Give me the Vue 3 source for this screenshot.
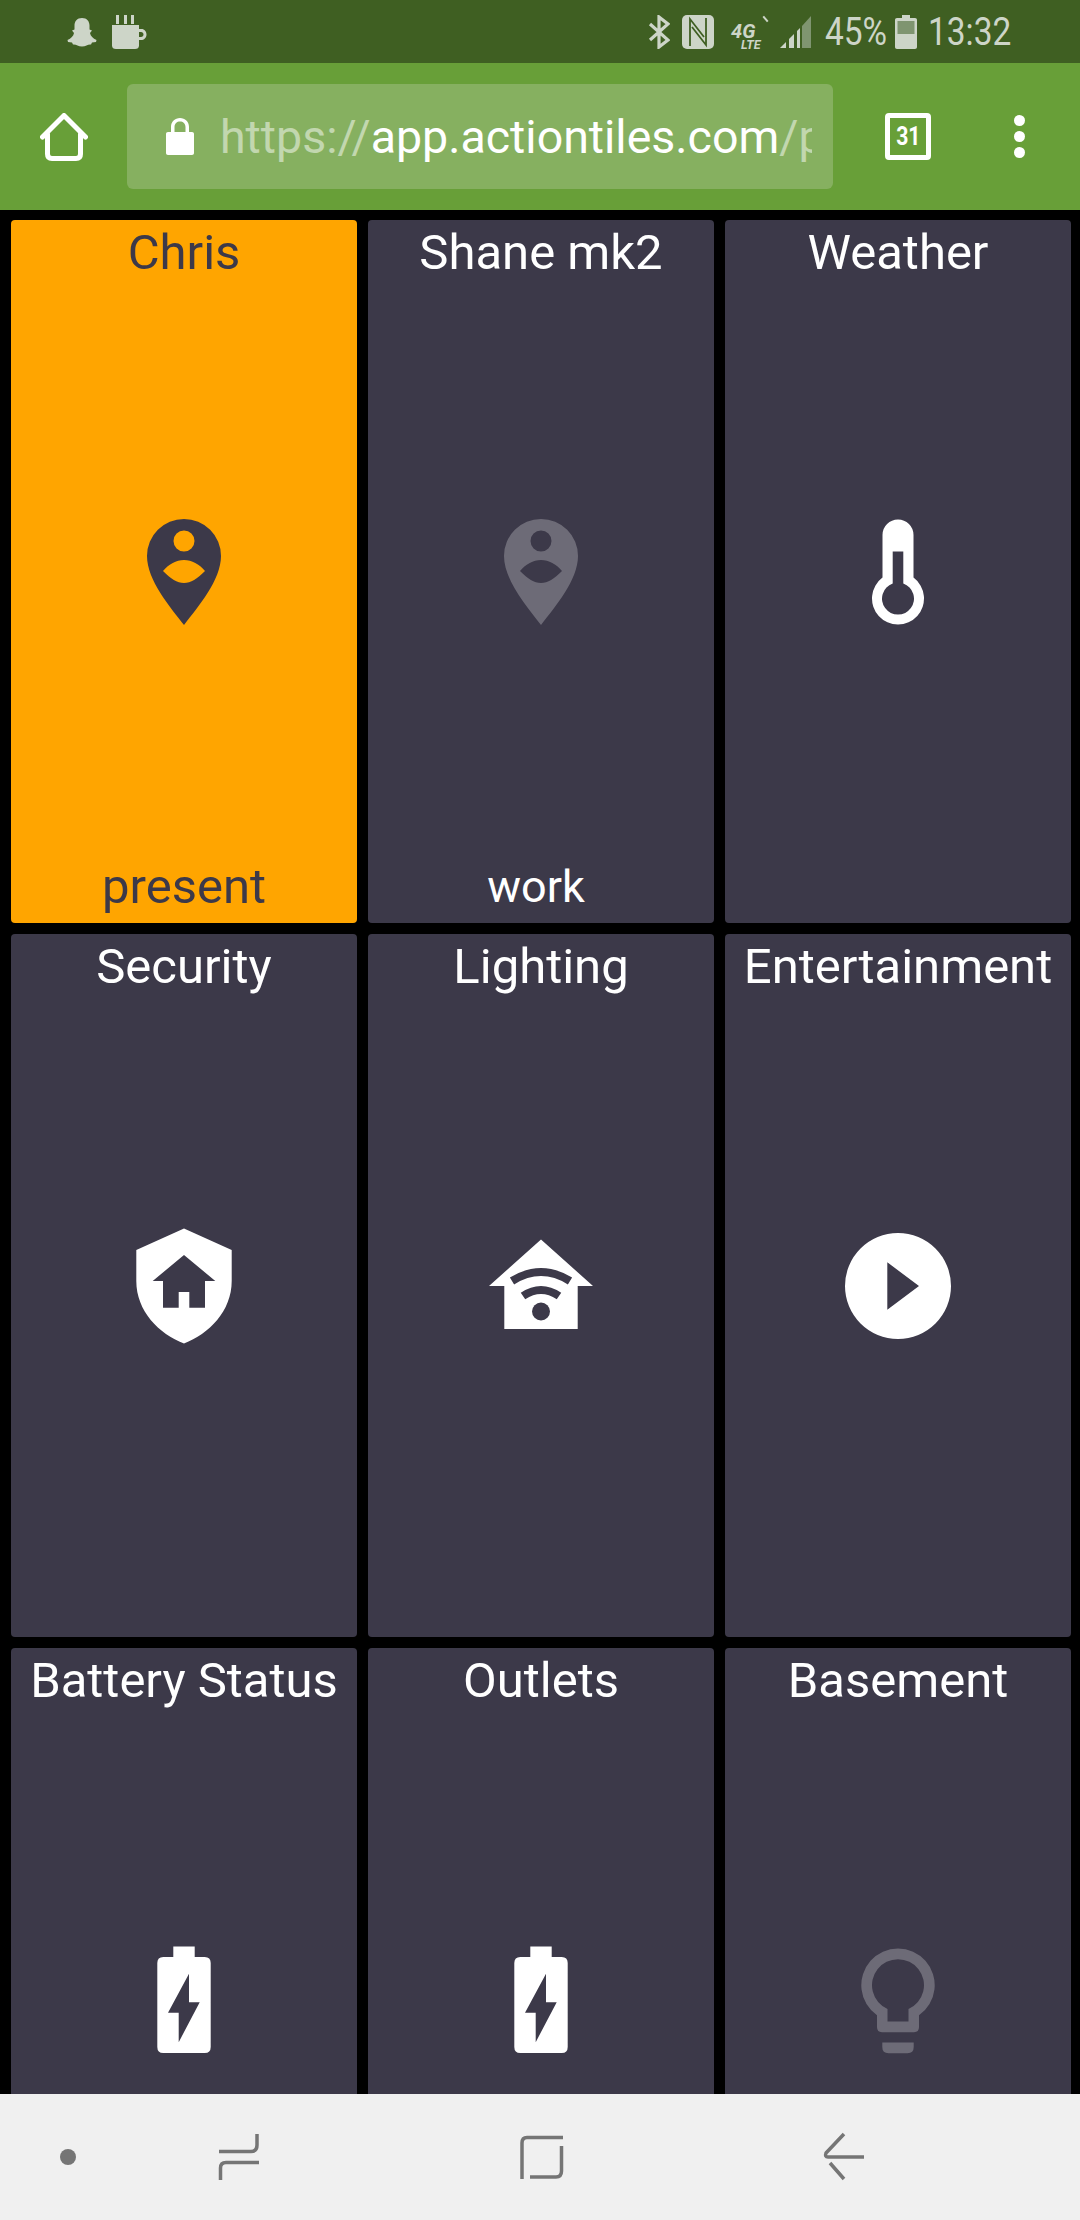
<template>
  <div class="screen">
    <header class="statusbar">
      <div class="status-left">
        <!-- snapchat ghost -->
        <svg class="ic-ghost" viewBox="0 0 30 30" width="30" height="30">
          <path d="M15 1C10 1 7.500 4.500 7.500 8.500V12.500L5 13.500L7 16C6.500 19 4 21.500 0.500 23L1 25L5 25.500L6 27.500C9 27 11 29.500 15 29.500C19 29.500 21 27 24 27.500L25 25.500L29 25L29.500 23C26 21.500 23.500 19 23 16L25 13.500L22.500 12.500V8.500C22.500 4.500 20 1 15 1Z" />
        </svg>
        <!-- coffee cup -->
        <svg class="ic-cup" viewBox="0 0 36 36" width="36" height="36">
          <path d="M5 1H8V10H5ZM13 1H16V10H13ZM20 1H23V10H20ZM1 11H28V15H30.500C33.500 15 35.500 17.500 35.500 20.500C35.500 24 33 26 30 26H28V31.500C28 34 26.500 35 24 35H5C2.500 35 1 34 1 31.500ZM28 18V23H30C31.500 23 32.500 22 32.500 20.500C32.500 19 31.500 18 30 18Z" fill-rule="evenodd" />
        </svg>
      </div>
      <div class="status-right">
        <svg class="ic-bt" viewBox="0 0 22 34" width="22" height="34">
          <path d="M2 9L20 25L11 32V2L20 9L2 25" fill="none" stroke="#cdd5c8" stroke-width="3.200" />
        </svg>
        <svg class="ic-nfc" viewBox="0 0 32 34" width="32" height="34">
          <rect width="32" height="34" rx="5" fill="#cdd5c8" />
          <path d="M8 31V4L22 22M10 12L24 30V3" fill="none" stroke="#3f5f22" stroke-width="1.800" />
        </svg>
        <div class="net">
          <span class="net-4g">4G</span>
          <span class="net-lte">LTE</span>
          <i class="net-tick"></i>
        </div>
        <svg class="ic-signal" viewBox="0 0 32 34" width="32" height="34">
          <path d="M0 33L6 27V33Z" fill="#cdd5c8" />
          <path d="M9 24L14 19V33H9Z" fill="#cdd5c8" />
          <path d="M17 16L20 13V33H17Z" fill="#cdd5c8" />
          <path d="M22 11L31 1V33H22Z" fill="#7f9570" />
        </svg>
        <span class="pct">45%</span>
        <svg class="ic-batt" viewBox="0 0 22 34" width="22" height="34">
          <path d="M7 0H15V3H20C21.200 3 22 3.800 22 5V32C22 33.200 21.200 34 20 34H2C0.800 34 0 33.200 0 32V5C0 3.800 0.800 3 2 3H7Z" fill="#cdd5c8" />
          <rect x="2.500" y="6" width="17" height="13" fill="#7f9570" />
        </svg>
        <span class="clock">13:32</span>
      </div>
    </header>

    <div class="toolbar">
      <svg class="ic-home" viewBox="0 0 48 48" width="48" height="48">
        <path d="M2.500 24L24 2.500L45.500 24M7.500 21V41C7.500 44 9 45.500 12 45.500H36C39 45.500 40.500 44 40.500 41V21" fill="none" stroke="#fff" stroke-width="5" stroke-linecap="round" stroke-linejoin="round" />
      </svg>
      <div class="urlbar">
        <svg class="ic-lock" viewBox="0 0 28 38" width="28" height="38">
          <path d="M2 15H5V10C5 4.500 9 1 14 1C19 1 23 4.500 23 10V15H26C27.200 15 28 15.800 28 17V36C28 37.200 27.200 38 26 38H2C0.800 38 0 37.200 0 36V17C0 15.800 0.800 15 2 15ZM8.500 15H19.500V10C19.500 6.500 17 4.500 14 4.500C11 4.500 8.500 6.500 8.500 10Z" fill="#fff" fill-rule="evenodd" />
        </svg>
        <div class="url"><span class="dim">https://</span>app.actiontiles.com<span class="dim">/p</span></div>
      </div>
      <div class="tabs"><span>31</span></div>
      <div class="menu"><i></i><i></i><i></i></div>
    </div>

    <main class="board">
      <section
        v-for="t in tiles"
        :key="t.name"
        class="tile"
        :class="{ 'tile--on': t.on }"
      >
        <div class="tile-name">{{ t.name }}</div>
        <div class="tile-icon">
          <svg viewBox="-60 -60 120 120" width="120" height="120" :class="{ faded: t.faded }">
            <template v-if="t.icon === 'pin'">
              <path fill-rule="evenodd" d="M0 53C-14 35 -37 8 -37 -16A37 37 0 0 1 37 -16C37 8 14 35 0 53ZM-10.500 -31A10.500 10.500 0 0 0 10.500 -31A10.500 10.500 0 0 0 -10.500 -31ZM-21 -1C-13 7 -7 11 0 11C7 11 13 7 21 -1C15 -8 8 -12 0 -12C-8 -12 -15 -8 -21 -1Z" />
            </template>
            <template v-else-if="t.icon === 'thermo'">
              <path fill-rule="evenodd" d="M-15.500 -37A15.500 15.500 0 0 1 15.500 -37V5.600A26 26 0 1 1 -15.500 5.600ZM-5.300 -20.500V11.500A16 16 0 1 0 5.300 11.500V-20.500Z" />
            </template>
            <template v-else-if="t.icon === 'shield'">
              <path fill-rule="evenodd" d="M0 -57.500L47.700 -36V-5C47.700 25 25 48 0 57.500C-25 48 -47.700 25 -47.700 -5V-36ZM0 -31L-31.300 -5H-21V21.800H-5.300V6H5.300V21.800H21V-5H31.300Z" />
            </template>
            <template v-else-if="t.icon === 'wifi'">
              <path d="M0 -46.500L52 0H36.700V43H-36.700V0H-52Z" />
              <path d="M-29 -5Q0 -23 29 -5M-18 10Q0 -2 18 10" fill="none" stroke="#3c3949" stroke-width="8" />
              <circle cx="0" cy="25.500" r="9" fill="#3c3949" />
            </template>
            <template v-else-if="t.icon === 'play'">
              <path fill-rule="evenodd" d="M-53 0A53 53 0 0 1 53 0A53 53 0 0 1 -53 0ZM-10.700 -23.700V23.700L21 0Z" />
            </template>
            <template v-else-if="t.icon === 'battery'">
              <path fill-rule="evenodd" d="M-10.700 -53.500H10.700V-43H20.700Q26.700 -43 26.700 -37V47Q26.700 53 20.700 53H-20.700Q-26.700 53 -26.700 47V-37Q-26.700 -43 -20.700 -43H-10.700ZM5 -26.200L-16 12.800H-5.300V42.200L15.700 2.200H5Z" />
            </template>
            <template v-else-if="t.icon === 'bulb'">
              <path fill-rule="evenodd" d="M-21 15.300A36.700 36.700 0 1 1 21 15.300V27Q21 32.200 16 32.200H-16Q-21 32.200 -21 27ZM-10.500 9V21.500H10.500V9A26 26 0 1 0 -10.500 9Z" />
              <path d="M-15.700 42.500H15.700V47Q15.700 53.200 9.500 53.200H-9.500Q-15.700 53.200 -15.700 47Z" />
            </template>
          </svg>
        </div>
        <div class="tile-state" :class="{ 'tile-state--small': t.state === 'work' }">{{ t.state }}</div>
      </section>
    </main>

    <nav class="navbar">
      <i class="nav-dot"></i>
      <svg viewBox="0 0 60 60" width="60" height="60">
        <path d="M10 24.500H42Q48 24.500 48 18V7M50 35.500H17Q11.500 35.500 11.500 41V53" />
      </svg>
      <svg viewBox="0 0 60 60" width="60" height="60">
        <path d="M52 10.500H16Q11 10.500 11 16V52M50.500 19V44Q50.500 50 45 50H19" />
      </svg>
      <svg viewBox="0 0 60 60" width="60" height="60">
        <path d="M30 7L12 26Q10.500 30 14 30H50M16 36L30 52" />
      </svg>
    </nav>
  </div>
</template>

<script setup>
const tiles = [
  { name: 'Chris', icon: 'pin', state: 'present', on: true },
  { name: 'Shane mk2', icon: 'pin', state: 'work', faded: true },
  { name: 'Weather', icon: 'thermo' },
  { name: 'Security', icon: 'shield' },
  { name: 'Lighting', icon: 'wifi' },
  { name: 'Entertainment', icon: 'play' },
  { name: 'Battery Status', icon: 'battery' },
  { name: 'Outlets', icon: 'battery' },
  { name: 'Basement', icon: 'bulb', faded: true }
]
</script>

<style>
html, body {
  background: #000;
}
</style>

<style scoped>
.screen {
  width: 1080px;
  height: 2220px;
  display: flex;
  flex-direction: column;
  overflow: hidden;
  background: #000;
  font-family: Roboto, "Liberation Sans", sans-serif;
}

/* status bar */
.statusbar {
  height: 63px;
  flex: none;
  background: #3f5f22;
  color: #cdd5c8;
  display: flex;
  justify-content: space-between;
  align-items: center;
  fill: #cdd5c8;
}
.status-left {
  display: flex;
  align-items: center;
  padding-left: 67px;
}
.ic-ghost { margin-top: 1px; }
.ic-cup { margin-left: 14px; }
.status-right {
  display: flex;
  align-items: center;
  padding-right: 68px;
}
.ic-nfc { margin-left: 12px; }
.net {
  position: relative;
  width: 36px;
  height: 34px;
  margin-left: 17px;
  font-weight: 700;
  font-style: italic;
}
.net-4g {
  position: absolute;
  left: 0;
  top: 7px;
  font-size: 20px;
  line-height: 18px;
}
.net-lte {
  position: absolute;
  left: 10px;
  top: 23px;
  font-size: 12.5px;
  line-height: 13px;
}
.net-tick {
  position: absolute;
  left: 31px;
  top: 3px;
  width: 7px;
  height: 2px;
  background: #cdd5c8;
  transform: rotate(50deg);
}
.ic-signal { margin-left: 13px; }
/* the phone's status font is narrower than Roboto */
.pct,
.clock {
  flex: none;
  font-size: 38px;
  line-height: 40px;
  white-space: nowrap;
  transform: scaleX(0.88);
  transform-origin: left center;
}
.pct {
  width: 61px;
  margin-left: 13px;
}
.ic-batt { margin-left: 9px; }
.clock {
  width: 84px;
  margin-left: 11px;
}

/* browser toolbar */
.toolbar {
  height: 147px;
  flex: none;
  background: #689f38;
  display: flex;
  align-items: center;
  padding-left: 40px;
}
.ic-home { flex: none; }
.urlbar {
  width: 706px;
  height: 105px;
  margin-left: 39px;
  background: #86b060;
  border-radius: 6px;
  display: flex;
  align-items: center;
  padding: 0 21px 0 39px;
  box-sizing: border-box;
}
.ic-lock {
  flex: none;
  margin-bottom: 2px;
}
.url {
  margin-left: 26px;
  font-size: 46.5px;
  line-height: 60px;
  color: #fff;
  white-space: nowrap;
  overflow: hidden;
}
.dim {
  color: rgba(255, 255, 255, 0.5);
}
.tabs {
  width: 46px;
  height: 47px;
  margin-left: 52px;
  box-sizing: border-box;
  border: 5px solid #fff;
  border-radius: 4px;
  color: #fff;
  font-size: 25px;
  font-weight: 700;
  line-height: 37px;
  text-align: center;
}
.tabs span {
  display: inline-block;
  transform: scaleX(0.85);
}
.menu {
  margin-left: 83px;
  display: flex;
  flex-direction: column;
  gap: 5px;
}
.menu i {
  display: block;
  width: 11px;
  height: 11px;
  border-radius: 50%;
  background: #fff;
}

/* tiles */
.board {
  flex: 1;
  min-height: 0;
  overflow: hidden;
  display: grid;
  grid-template-columns: repeat(3, 346px);
  grid-auto-rows: 703px;
  gap: 11px;
  padding: 10px 0 0 11px;
}
.tile {
  display: grid;
  grid-template-rows: 69px 1fr 69px;
  background: #3c3949;
  color: #fff;
  fill: #fff;
  border-radius: 4px;
  text-align: center;
}
.tile--on {
  background: #ffa500;
  color: #3c3949;
  fill: #3c3949;
}
.tile-name,
.tile-state {
  font-size: 49px;
  line-height: 66px;
  white-space: nowrap;
}
.tile-icon {
  display: flex;
  align-items: center;
  justify-content: center;
}
.faded {
  opacity: 0.25;
}
.tile-state--small {
  font-size: 45px;
  padding-right: 10px;
}

/* android nav bar */
.navbar {
  height: 126px;
  flex: none;
  background: #f0f0f0;
  display: grid;
  grid-template-columns: 136px 206px 398px 208px;
  align-items: center;
  justify-items: center;
}
.navbar svg {
  fill: none;
  stroke: #757575;
  stroke-width: 3.5;
}
.nav-dot {
  width: 16px;
  height: 16px;
  border-radius: 50%;
  background: #757575;
}
</style>
